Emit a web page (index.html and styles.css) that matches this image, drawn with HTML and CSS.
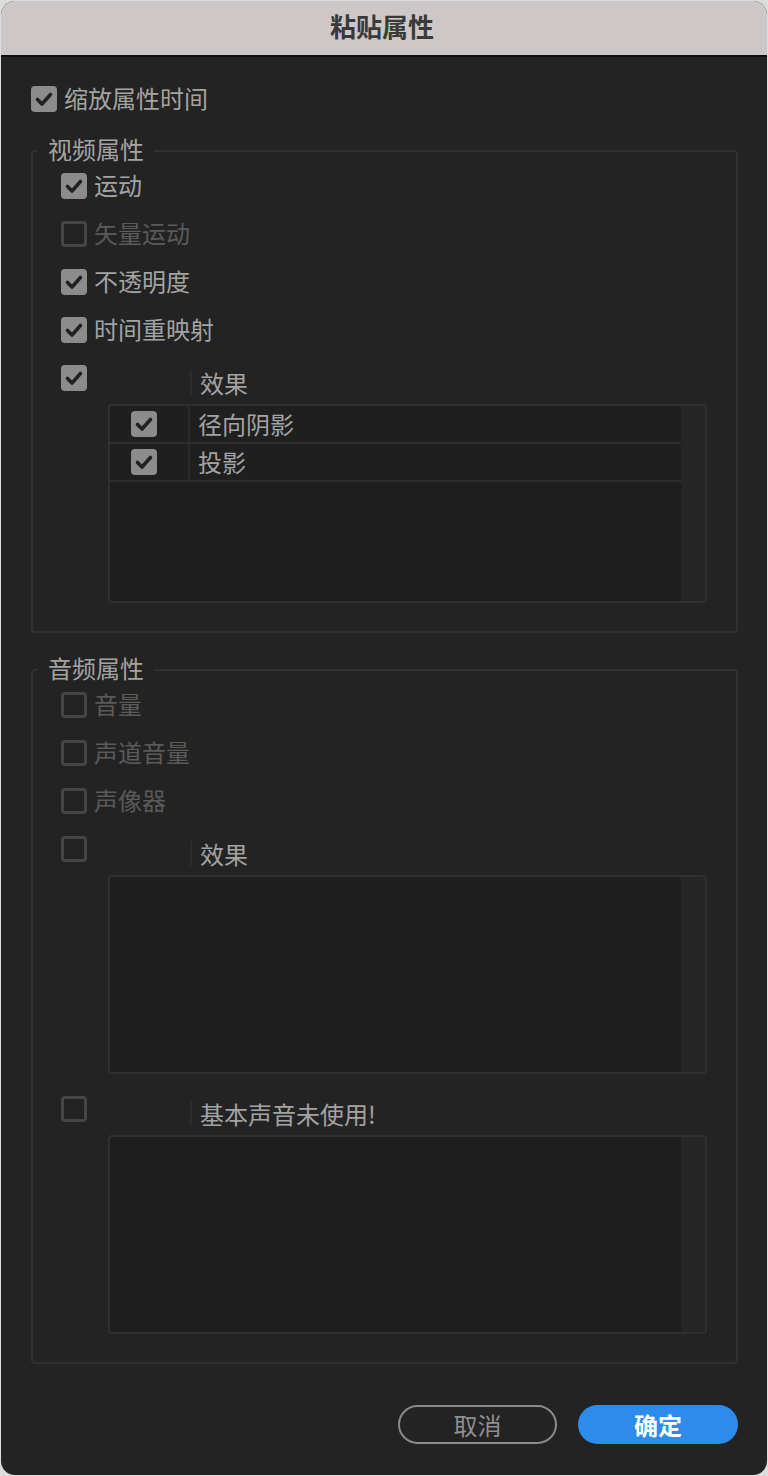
FILE: index.html
```html
<!DOCTYPE html>
<html lang="zh-CN">
<head>
<meta charset="utf-8">
<title>粘贴属性</title>
<link rel="stylesheet" href="styles.css">
</head>
<body>
<div class="window">
  <header class="titlebar">粘贴属性</header>
  <main class="content">
    <div class="check-row">
      <span class="cb on"><svg viewBox="0 0 26 26"><polyline points="6.5,13.5 11,18 19.5,8.5"/></svg></span>
      <span class="lbl">缩放属性时间</span>
    </div>

    <fieldset class="group video">
      <legend>视频属性</legend>
      <div class="group-body">
        <div class="check-row">
          <span class="cb on"><svg viewBox="0 0 26 26"><polyline points="6.5,13.5 11,18 19.5,8.5"/></svg></span>
          <span class="lbl">运动</span>
        </div>
        <div class="check-row disabled">
          <span class="cb off"></span>
          <span class="lbl">矢量运动</span>
        </div>
        <div class="check-row">
          <span class="cb on"><svg viewBox="0 0 26 26"><polyline points="6.5,13.5 11,18 19.5,8.5"/></svg></span>
          <span class="lbl">不透明度</span>
        </div>
        <div class="check-row">
          <span class="cb on"><svg viewBox="0 0 26 26"><polyline points="6.5,13.5 11,18 19.5,8.5"/></svg></span>
          <span class="lbl">时间重映射</span>
        </div>
        <div class="effects">
          <span class="cb on"><svg viewBox="0 0 26 26"><polyline points="6.5,13.5 11,18 19.5,8.5"/></svg></span>
          <div class="head"><span class="hc1"></span><span class="name">效果</span></div>
          <div class="table">
            <div class="rows">
              <div class="trow">
                <span class="c1"><span class="cb on"><svg viewBox="0 0 26 26"><polyline points="6.5,13.5 11,18 19.5,8.5"/></svg></span></span>
                <span class="name">径向阴影</span>
              </div>
              <div class="trow">
                <span class="c1"><span class="cb on"><svg viewBox="0 0 26 26"><polyline points="6.5,13.5 11,18 19.5,8.5"/></svg></span></span>
                <span class="name">投影</span>
              </div>
            </div>
            <div class="scroll"></div>
          </div>
        </div>
      </div>
    </fieldset>

    <fieldset class="group audio">
      <legend>音频属性</legend>
      <div class="group-body">
        <div class="check-row disabled">
          <span class="cb off"></span>
          <span class="lbl">音量</span>
        </div>
        <div class="check-row disabled">
          <span class="cb off"></span>
          <span class="lbl">声道音量</span>
        </div>
        <div class="check-row disabled">
          <span class="cb off"></span>
          <span class="lbl">声像器</span>
        </div>
        <div class="effects">
          <span class="cb off"></span>
          <div class="head"><span class="hc1"></span><span class="name">效果</span></div>
          <div class="table">
            <div class="rows"></div>
            <div class="scroll"></div>
          </div>
        </div>
        <div class="effects">
          <span class="cb off"></span>
          <div class="head"><span class="hc1"></span><span class="name">基本声音未使用!</span></div>
          <div class="table">
            <div class="rows"></div>
            <div class="scroll"></div>
          </div>
        </div>
      </div>
    </fieldset>

    <footer class="actions">
      <button class="btn cancel" type="button">取消</button>
      <button class="btn ok" type="button">确定</button>
    </footer>
  </main>
</div>
</body>
</html>
```

FILE: styles.css
```css
html, body {
  margin: 0;
  padding: 0;
}
body {
  background: #dcdcdc;
  font-family: "Noto Sans CJK SC", "Noto Sans", sans-serif;
}
.window {
  width: 766px;
  height: 1474px;
  margin: 1px;
  background: #232323;
  border-radius: 14px;
  overflow: hidden;
  display: flex;
  flex-direction: column;
}
.titlebar {
  flex: none;
  height: 56px;
  box-sizing: border-box;
  padding-bottom: 6px;
  padding-right: 4px;
  background: #cdc8c7;
  border-bottom: 2px solid #0f0f0f;
  display: flex;
  align-items: center;
  justify-content: center;
  font-size: 26px;
  font-weight: 700;
  color: #3a3a3a;
}
.content {
  flex: 1;
  display: flex;
  flex-direction: column;
  padding: 29px 29px 0 30px;
}
.check-row {
  display: flex;
  align-items: center;
  gap: 7px;
  height: 26px;
  font-size: 24px;
  line-height: 26px;
  color: #a3a3a3;
}
.check-row .lbl {
  position: relative;
  top: -1px;
}
.check-row.disabled {
  color: #5a5a5a;
}
.cb {
  width: 26px;
  height: 26px;
  box-sizing: border-box;
  border-radius: 4px;
  flex: none;
  display: flex;
}
.cb.on {
  background: #8c8c8c;
}
.cb.off {
  border: 3px solid #464646;
}
.cb svg {
  width: 26px;
  height: 26px;
  fill: none;
  stroke: #222222;
  stroke-width: 3.6;
  stroke-linecap: round;
  stroke-linejoin: round;
}
.group {
  margin: 23px 0 0;
  border: 2px solid #303030;
  border-radius: 4px;
  padding: 6px 29px 28px 28px;
  min-width: 0;
}
.group.audio {
  margin-top: 21px;
}
.group legend {
  padding: 0 10px 4px;
  margin-left: -23px;
  font-size: 24px;
  line-height: 28px;
  color: #a3a3a3;
}
.group-body {
  display: flex;
  flex-direction: column;
  gap: 22px;
}
.effects {
  display: grid;
  grid-template-columns: 47px 1fr;
  grid-template-rows: 39px auto;
}
.effects > .cb {
  grid-column: 1;
  grid-row: 1;
}
.head {
  grid-column: 2;
  grid-row: 1;
  display: flex;
  align-items: flex-start;
  padding-top: 5px;
}
.head .hc1 {
  width: 82px;
  height: 25px;
  border-right: 2px solid #2c2c2c;
  flex: none;
}
.head .name {
  padding-left: 8px;
  font-size: 24px;
  line-height: 25px;
  color: #a3a3a3;
}
.table {
  grid-column: 2;
  grid-row: 2;
  height: 199px;
  box-sizing: border-box;
  border: 2px solid #303030;
  border-radius: 4px;
  background: #1e1e1e;
  display: flex;
  overflow: hidden;
}
.rows {
  flex: 1;
}
.scroll {
  width: 24px;
  flex: none;
  background: #262626;
}
.trow {
  height: 36px;
  border-bottom: 2px solid #2e2e2e;
  display: flex;
  align-items: center;
  background: #1f1f1f;
}
.trow .c1 {
  width: 80px;
  height: 100%;
  box-sizing: border-box;
  padding-left: 21px;
  border-right: 2px solid #2a2a2a;
  display: flex;
  align-items: center;
  flex: none;
}
.trow .name {
  padding-left: 8px;
  font-size: 24px;
  line-height: 36px;
  color: #a3a3a3;
}
.actions {
  display: flex;
  justify-content: flex-end;
  gap: 21px;
  margin-top: 41px;
}
.btn {
  width: 160px;
  height: 39px;
  box-sizing: border-box;
  border-radius: 20px;
  padding: 0;
  font-family: inherit;
  font-size: 24px;
  line-height: 35px;
}
.btn.cancel {
  width: 159px;
  background: transparent;
  border: 2px solid #8a8a8a;
  color: #8f8f8f;
}
.btn.ok {
  background: #2d8ceb;
  border: none;
  color: #ffffff;
  font-weight: 700;
}
```
